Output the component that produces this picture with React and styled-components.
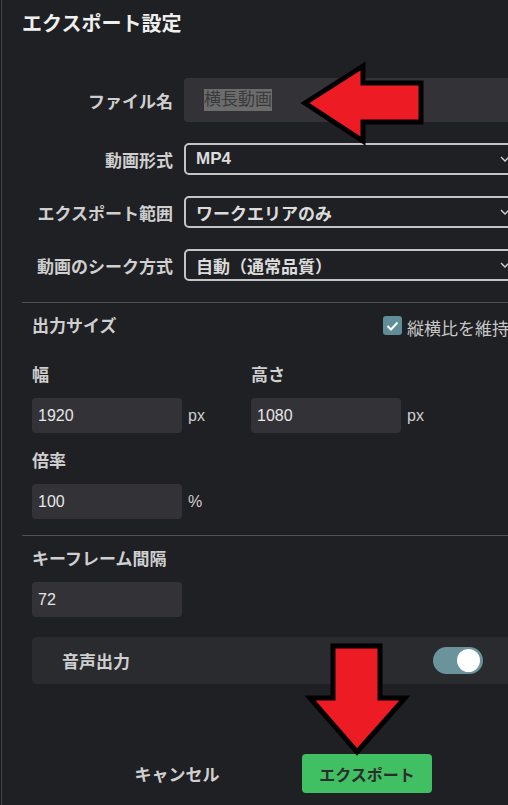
import styled, { createGlobalStyle } from 'styled-components';

const GlobalStyle = createGlobalStyle`
	html, body {
		margin: 0;
		padding: 0;
		background: #17181a;
	}
	body {
		font-family: 'Liberation Sans', 'Noto Sans CJK JP', sans-serif;
	}
`;

const Page = styled.div`
	position: relative;
	width: 508px;
	height: 805px;
	overflow: hidden;
	background: #17181a;
`;

const Dialog = styled.div`
	box-sizing: border-box;
	width: 541px;
	height: 805px;
	margin-left: 1px;
	border-left: 1px solid #44454a;
	background: #1f2024;
	padding: 12px 20px 0;
	display: flex;
	flex-direction: column;
	color: #d0d0d0;
`;

const Title = styled.h2`
	margin: 0;
	font-size: 20px;
	line-height: 24px;
	font-weight: 700;
	color: #efefef;
`;

const FormRows = styled.div`
	margin-top: 42px;
	display: flex;
	flex-direction: column;
	gap: 21px;
`;

const FormRow = styled.div`
	display: grid;
	grid-template-columns: 151px 1fr;
	column-gap: 11px;
	align-items: center;
`;

const RowLabel = styled.label`
	text-align: right;
	font-size: 17px;
	font-weight: 700;
	color: #cfcfcf;
	white-space: nowrap;
`;

const NameInput = styled.div`
	height: 44px;
	border-radius: 4px;
	background: #323237;
	display: flex;
	align-items: center;
	padding-left: 20px;
	font-size: 17px;
`;

const Selected = styled.span`
	background: #6c6c6c;
	color: #3a3a3a;
	line-height: 22px;
`;

const Select = styled.div`
	box-sizing: border-box;
	height: 32px;
	border: 2px solid #c4c4c4;
	border-radius: 5px;
	display: flex;
	align-items: center;
	justify-content: space-between;
	padding: 0 10px 0 10px;
	font-size: 17px;
	font-weight: 700;
	color: #dcdcdc;
`;

const Divider = styled.hr`
	margin: ${(p) => p.$top}px 0 0;
	border: none;
	height: 1px;
	background: #505156;
`;

const Section = styled.div`
	padding: ${(p) => p.$top}px 10px 0;
	display: flex;
	flex-direction: column;
`;

const SectionHead = styled.div`
	display: flex;
	justify-content: space-between;
	align-items: center;
	height: 24px;
	padding-right: 3px;
`;

const Heading = styled.div`
	font-size: 17px;
	line-height: 24px;
	font-weight: 700;
	color: #cfcfcf;
`;

const CheckLabel = styled.label`
	display: flex;
	align-items: center;
	gap: 5px;
	font-size: 17px;
	color: #c8c8c8;
	white-space: nowrap;
`;

const CheckBox = styled.span`
	width: 19px;
	height: 19px;
	border-radius: 3px;
	background: #5f8e99;
	display: flex;
	align-items: center;
	justify-content: center;
	margin-top: -3px;
`;

const FieldGrid = styled.div`
	display: grid;
	grid-template-columns: 219px 219px;
	margin-top: ${(p) => p.$top || 0}px;
`;

const Field = styled.div`
	display: flex;
	flex-direction: column;
	gap: 10px;
`;

const InputLine = styled.div`
	display: flex;
	align-items: center;
	gap: 6px;
`;

const NumInput = styled.div`
	box-sizing: border-box;
	width: 150px;
	height: 35px;
	border-radius: 4px;
	background: #323237;
	padding-left: 6px;
	display: flex;
	align-items: center;
	font-size: 16px;
	color: #e6e6e6;
`;

const Unit = styled.span`
	font-size: 16px;
	color: #cfcfcf;
	padding-top: 1px;
`;

const AudioBox = styled.div`
	margin-top: 20px;
	height: 47px;
	border-radius: 5px;
	background: #2a2b2f;
	display: flex;
	align-items: center;
	justify-content: space-between;
	padding: 0 29px 0 30px;
	font-size: 17px;
	font-weight: 700;
	color: #cfcfcf;
`;

const Toggle = styled.span`
	box-sizing: border-box;
	width: 50px;
	height: 27px;
	border-radius: 14px;
	background: #6a939c;
	display: flex;
	align-items: center;
	justify-content: flex-end;
	padding: 0 3px;

	&::after {
		content: '';
		width: 23px;
		height: 23px;
		border-radius: 50%;
		background: #fff;
	}
`;

const Footer = styled.div`
	margin-top: 70px;
	display: flex;
	justify-content: center;
	gap: 60px;
`;

const Button = styled.button`
	width: 130px;
	height: 39px;
	border: none;
	border-radius: 4px;
	font-family: inherit;
	font-weight: 700;
	background: ${(p) => (p.$primary ? '#40bf63' : 'transparent')};
	color: ${(p) => (p.$primary ? '#2b2d2c' : '#cfcfcf')};
	font-size: ${(p) => (p.$primary ? 16 : 17)}px;
	padding: 0;
`;

const Arrow = styled.svg`
	position: absolute;
	left: ${(p) => p.$x}px;
	top: ${(p) => p.$y}px;
`;

const Chevron = () => (
	<svg width="10" height="6" viewBox="0 0 10 6">
		<path d="M1 1l4 4 4-4" fill="none" stroke="#cfcfcf" strokeWidth="1.4" />
	</svg>
);

const selects = [
	{ label: '動画形式', value: 'MP4' },
	{ label: 'エクスポート範囲', value: 'ワークエリアのみ' },
	{ label: '動画のシーク方式', value: '自動（通常品質）' },
];

const App = () => (
	<Page>
		<GlobalStyle />
		<Dialog>
			<Title>エクスポート設定</Title>
			<FormRows>
				<FormRow>
					<RowLabel>ファイル名</RowLabel>
					<NameInput>
						<Selected>横長動画</Selected>
					</NameInput>
				</FormRow>
				{selects.map((s) => (
					<FormRow key={s.label}>
						<RowLabel>{s.label}</RowLabel>
						<Select>
							<span>{s.value}</span>
							<Chevron />
						</Select>
					</FormRow>
				))}
			</FormRows>
			<Divider $top={21} />
			<Section $top={12}>
				<SectionHead>
					<Heading>出力サイズ</Heading>
					<CheckLabel>
						<CheckBox>
							<svg width="13" height="10" viewBox="0 0 13 10">
								<path d="M1.5 5l3.5 3.5 6.5-7" fill="none" stroke="#fff" strokeWidth="2" />
							</svg>
						</CheckBox>
						縦横比を維持
					</CheckLabel>
				</SectionHead>
				<FieldGrid $top={25}>
					<Field>
						<Heading>幅</Heading>
						<InputLine>
							<NumInput>1920</NumInput>
							<Unit>px</Unit>
						</InputLine>
					</Field>
					<Field>
						<Heading>高さ</Heading>
						<InputLine>
							<NumInput>1080</NumInput>
							<Unit>px</Unit>
						</InputLine>
					</Field>
				</FieldGrid>
				<FieldGrid $top={17}>
					<Field>
						<Heading>倍率</Heading>
						<InputLine>
							<NumInput>100</NumInput>
							<Unit>%</Unit>
						</InputLine>
					</Field>
				</FieldGrid>
			</Section>
			<Divider $top={16} />
			<Section $top={12}>
				<Field>
					<Heading>キーフレーム間隔</Heading>
					<InputLine>
						<NumInput>72</NumInput>
					</InputLine>
				</Field>
				<AudioBox>
					<span>音声出力</span>
					<Toggle />
				</AudioBox>
			</Section>
			<Footer>
				<Button>キャンセル</Button>
				<Button $primary>エクスポート</Button>
			</Footer>
		</Dialog>
		<Arrow $x={300} $y={60} width="128" height="88" viewBox="0 0 128 88">
			<polygon
				points="5,43 63,6 63,23 121,23 121,62 63,62 63,81"
				fill="#ed1c24"
				stroke="#000"
				strokeWidth="5"
			/>
		</Arrow>
		<Arrow $x={303} $y={640} width="110" height="120" viewBox="0 0 110 120">
			<polygon
				points="30,6 77,6 77,58 102,58 54,112 7,58 30,58"
				fill="#ed1c24"
				stroke="#000"
				strokeWidth="5"
			/>
		</Arrow>
	</Page>
);

export default App;
